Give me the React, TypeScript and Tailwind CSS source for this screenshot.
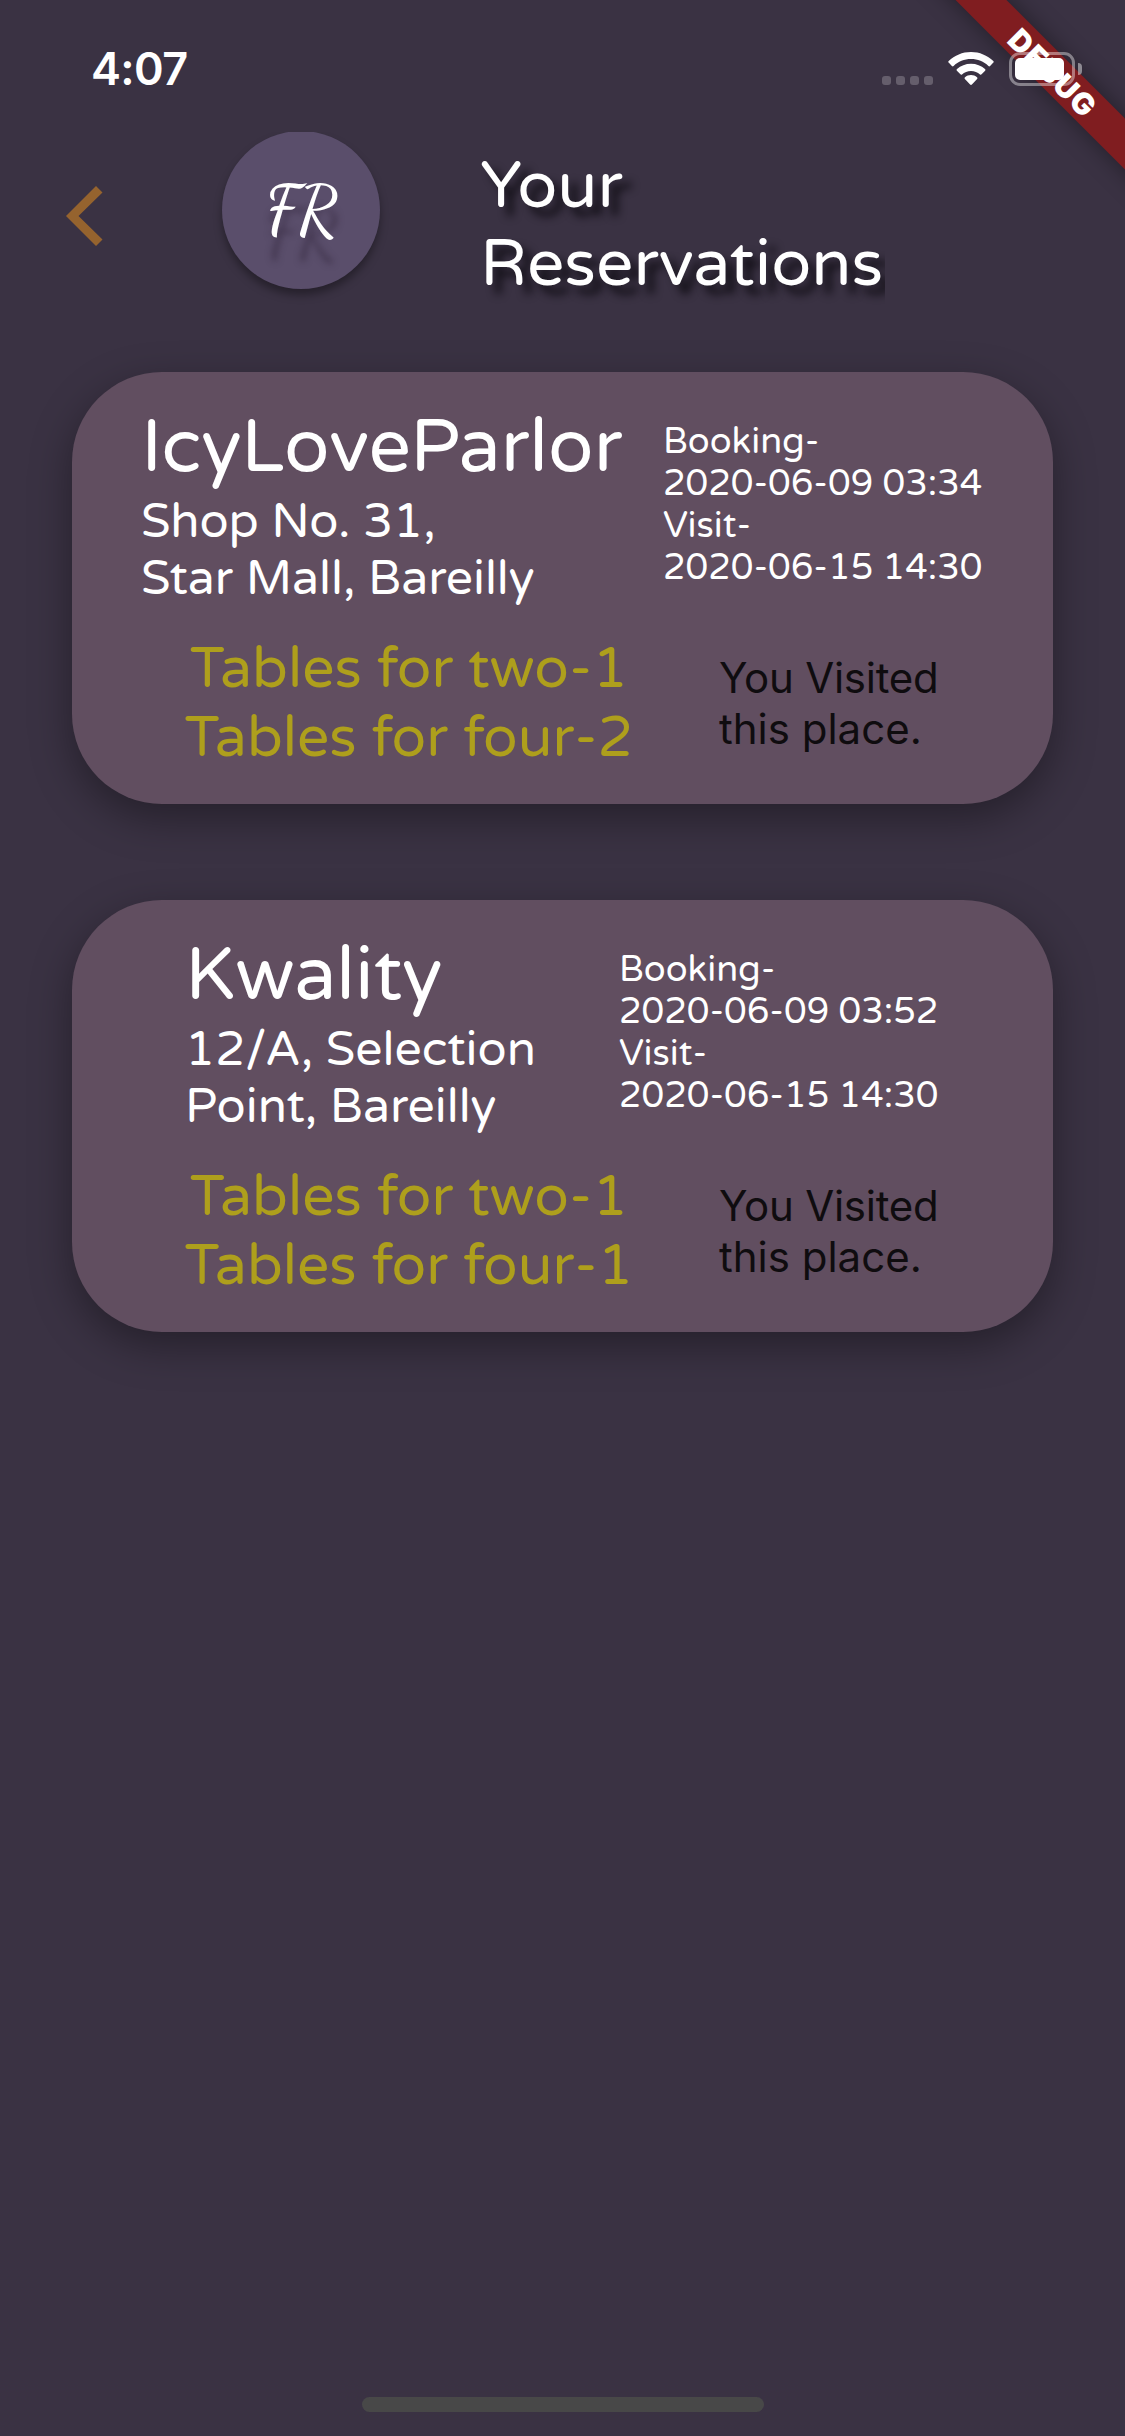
import React from "react";

type Reservation = {
  name: string;
  address: string[];
  tables: string[];
  times: string[];
  /** Left inset of the top row and width of its first column. */
  inset: string;
  column: string;
};

const reservations: Reservation[] = [
  {
    name: "IcyLoveParlor",
    address: ["Shop No. 31,", "Star Mall, Bareilly"],
    tables: ["Tables for two-1", "Tables for four-2"],
    times: ["Booking-", "2020-06-09 03:34", "Visit-", "2020-06-15 14:30"],
    inset: "pl-[69px]",
    column: "w-[522px]",
  },
  {
    name: "Kwality",
    address: ["12/A, Selection", "Point, Bareilly"],
    tables: ["Tables for two-1", "Tables for four-1"],
    times: ["Booking-", "2020-06-09 03:52", "Visit-", "2020-06-15 14:30"],
    inset: "pl-[113px]",
    column: "w-[434px]",
  },
];

function DebugBanner() {
  return (
    <div className="absolute left-[853px] top-[54px] flex h-9 w-[400px] rotate-45 items-center justify-center bg-[#801d20] shadow-[0_0_24px_rgba(0,0,0,0.4)]">
      <span className="pl-px pt-px font-['Inter'] text-[30px] font-black leading-9 tracking-[1.3px] text-white">
        DEBUG
      </span>
    </div>
  );
}

function StatusBar() {
  return (
    <div className="relative flex h-[132px] items-start pl-[91px]">
      <DebugBanner />
      <div className="mt-[42px] w-[791px] font-['Inter'] text-[45px] font-semibold leading-[54px] tracking-[-0.6px]">
        4:07
      </div>
      <div className="mt-[76px] flex gap-[5px]">
        {[0, 1, 2, 3].map((i) => (
          <span key={i} className="size-[9px] rounded-[3px] bg-[#655e6c]" />
        ))}
      </div>
      <svg className="ml-[15px] mt-[52px] h-[34px] w-[46px]" viewBox="0 0 46 34" fill="#fff">
        <path d="M23 0c8.600 0 16.400 3.400 22.300 8.900.6.500.6 1.200.1 1.700l-3.300 3.400c-.5.500-1.200.5-1.700 0C35.800 9.700 29.700 7.100 23 7.100S10.200 9.700 5.600 14c-.5.500-1.200.5-1.700 0L.6 10.600c-.5-.5-.5-1.200.1-1.700C6.600 3.400 14.400 0 23 0z" />
        <path d="M23 11.700c5.400 0 10.300 2 14 5.400.6.500.6 1.200.1 1.700l-3.500 3.500c-.5.500-1.100.5-1.600.1-2.400-2.100-5.500-3.400-9-3.400s-6.600 1.300-9 3.400c-.5.400-1.100.4-1.600-.1l-3.500-3.500c-.5-.5-.5-1.200.1-1.700 3.700-3.400 8.600-5.400 14-5.400z" />
        <path d="M23 23.100c2.300 0 4.400.8 6 2.200.6.500.6 1.200.1 1.700l-5.200 5.500c-.5.600-1.300.6-1.800 0L16.900 27c-.5-.5-.5-1.200.1-1.700 1.600-1.400 3.700-2.200 6-2.200z" />
      </svg>
      <div className="relative ml-[15px] mt-[52px] h-[34px] w-[66px] rounded-[11px] border-[3px] border-white/40 p-[3px]">
        <div className="h-[22px] w-[49px] rounded-[5px] bg-white" />
      </div>
      <div className="relative ml-[3px] mt-[63px] h-3 w-1 rounded-r-full bg-white/45" />
    </div>
  );
}

function Header() {
  return (
    <header className="flex h-[240px] items-start">
      <svg className="ml-[66px] mt-[54px] h-[60px] w-[37px]" viewBox="0 0 37 60" fill="#95632e">
        <path d="M0 30 30 0 36.500 6.500 12.500 30 36.500 53.500 30 60z" />
      </svg>
      <div className="-mt-px ml-[119px] flex size-[158px] justify-center rounded-full bg-[#5a4e6b] shadow-[0_6px_9px_rgba(0,0,0,0.35)] [clip-path:inset(1px_-30px_-30px_-30px)]">
        <span className="mt-[38px] h-[84px] scale-x-[0.96] font-['Dancing_Script','Lato',cursive] text-[67px] font-semibold leading-[84px] [text-shadow:0_24px_6px_rgba(50,38,60,0.5)]">
          FR
        </span>
      </div>
      <h1 className="ml-[100px] mt-[15px] w-[405px] overflow-hidden pb-5 text-[66px] font-normal leading-[78px] [text-shadow:9px_9px_8px_rgba(10,8,14,0.85)]">
        Your
        <br />
        Reservations
      </h1>
    </header>
  );
}

function Lines({ items }: { items: string[] }) {
  return (
    <>
      {items.map((text) => (
        <div key={text} className="whitespace-nowrap">
          {text}
        </div>
      ))}
    </>
  );
}

function ReservationCard({ item }: { item: Reservation }) {
  return (
    <article className="h-[432px] rounded-[90px] bg-[#614e60] shadow-[0_14px_42px_rgba(0,0,0,0.36)]">
      <div className={`flex h-[258px] items-start ${item.inset}`}>
        <div className={`mt-[30px] shrink-0 ${item.column}`}>
          <h2 className="text-[75px] leading-[90px]">{item.name}</h2>
          <div className="mt-0.5 text-[48px] leading-[57px]">
            <Lines items={item.address} />
          </div>
        </div>
        <div className="mt-[49px] text-[36px] leading-[42px]">
          <Lines items={item.times} />
        </div>
      </div>
      <div className="flex items-start pl-[114px]">
        <div className="mt-[5px] flex w-[446px] shrink-0 flex-col items-center text-[57px] leading-[69px] text-[#ae9f1c]">
          <Lines items={item.tables} />
        </div>
        <p className="ml-[87px] mt-[22px] whitespace-nowrap font-['Inter'] text-[42px] leading-[51px] text-[#0f0c0f]">
          <span className="tracking-[-0.24px]">You Visited</span>
          <br />
          this place.
        </p>
      </div>
    </article>
  );
}

export default function App() {
  return (
    <main className="relative flex h-[2436px] w-[1125px] flex-col overflow-hidden bg-[#3a3243] font-['Varela_Round','Lato',sans-serif] text-white">
      <StatusBar />
      <Header />
      <section className="flex flex-col gap-24 px-[72px]">
        {reservations.map((item) => (
          <ReservationCard key={item.name} item={item} />
        ))}
      </section>
      <div className="mb-6 ml-[362px] mt-auto h-[15px] w-[402px] rounded-full bg-[#484848]" />
    </main>
  );
}
